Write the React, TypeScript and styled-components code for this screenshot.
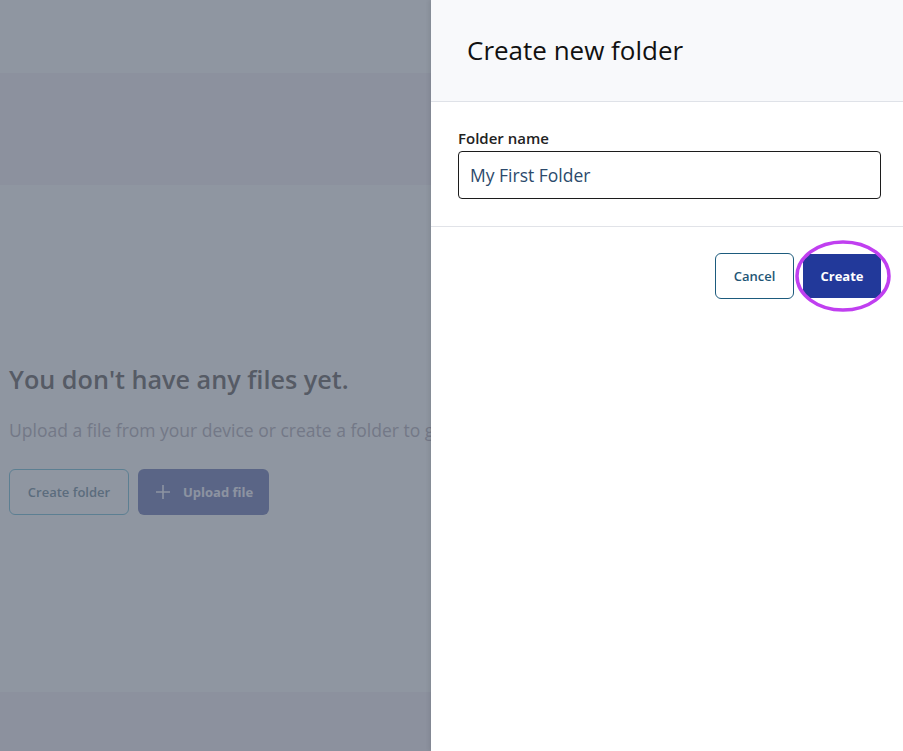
import React from "react";
import styled, { createGlobalStyle } from "styled-components";

const Global = createGlobalStyle`
  html, body { margin: 0; padding: 0; height: 100%; overflow: hidden; }
  body { font-family: "Open Sans", "Noto Sans", sans-serif; background: #ffffff; }
  #root { height: 100%; }
  * { box-sizing: border-box; }
`;

const Page = styled.div`
  position: relative;
  height: 751px;
  width: 903px;
  display: flex;
  flex-direction: column;
  overflow: hidden;
`;

const Band = styled.div<{ $h: number; $bg: string }>`
  height: ${(p) => p.$h}px;
  flex: none;
  background: ${(p) => p.$bg};
`;

const Main = styled.main`
  flex: 1;
  display: flex;
  flex-direction: column;
  justify-content: center;
  padding: 0 9px;
  background: #ffffff;
`;

const EmptyTitle = styled.h2`
  margin: 0;
  font-size: 25.2px;
  font-weight: 600;
  line-height: 32px;
  color: #8c8887;
  white-space: nowrap;
`;

const EmptyText = styled.p`
  margin: 22px 0 0;
  font-size: 17.5px;
  line-height: 26px;
  color: #c7c3ca;
  white-space: nowrap;
`;

const Actions = styled.div`
  display: flex;
  gap: 9px;
  margin-top: 26px;
`;

const GhostButton = styled.button`
  height: 46px;
  width: 120px;
  border-radius: 6px;
  border: 1px solid #99d1e0;
  background: transparent;
  font-family: inherit;
  font-size: 13px;
  font-weight: 600;
  color: #97abb6;
`;

const SolidButton = styled.button`
  height: 46px;
  width: 131px;
  padding: 0 0 0 17px;
  border-radius: 6px;
  border: none;
  background: #959dc8;
  font-family: inherit;
  font-size: 13px;
  font-weight: 700;
  color: #f9f9ff;
  display: flex;
  align-items: center;
  gap: 12px;
`;

const Overlay = styled.div`
  position: absolute;
  inset: 0;
  background: rgba(31, 45, 68, 0.5);
`;

const Drawer = styled.aside`
  position: absolute;
  top: 0;
  right: 0;
  width: 472px;
  height: 100%;
  background: #ffffff;
  box-shadow: -2px 0 4px rgba(0, 0, 0, 0.08);
  display: flex;
  flex-direction: column;
`;

const DrawerHeader = styled.header`
  height: 102px;
  flex: none;
  background: #f8f9fb;
  border-bottom: 1px solid #dfe2e8;
  display: flex;
  align-items: center;
  padding: 0 36px 2px;
`;

const DrawerTitle = styled.h1`
  margin: 0;
  font-size: 26px;
  font-weight: 400;
  color: #111111;
`;

const DrawerBody = styled.div`
  padding: 25px 22px 27px 27px;
  border-bottom: 1px solid #e1e3e8;
  display: flex;
  flex-direction: column;
  gap: 1px;
`;

const Label = styled.label`
  font-size: 15px;
  font-weight: 600;
  line-height: 23px;
  color: #222222;
`;

const Input = styled.input`
  height: 48px;
  width: 100%;
  border: 1px solid #1c1c1c;
  border-radius: 4px;
  padding: 0 11px;
  font-family: inherit;
  font-size: 17.5px;
  color: #2c4a6c;
  outline: none;
`;

const Footer = styled.div`
  display: flex;
  justify-content: flex-end;
  align-items: center;
  gap: 9px;
  padding: 26px 22px;
`;

const CancelButton = styled.button`
  height: 46px;
  width: 79px;
  border: 1px solid #1d5b7d;
  border-radius: 6px;
  background: #ffffff;
  font-family: inherit;
  font-size: 13px;
  font-weight: 600;
  color: #1f5676;
`;

const CreateWrap = styled.div`
  position: relative;
`;

const CreateButton = styled.button`
  height: 44px;
  width: 78px;
  border: none;
  border-radius: 6px;
  background: #22399a;
  font-family: inherit;
  font-size: 13px;
  font-weight: 700;
  color: #ffffff;
`;

const Highlight = styled.svg`
  position: absolute;
  left: -9px;
  top: -13px;
  width: 98px;
  height: 72px;
  pointer-events: none;
  overflow: visible;
`;

export default function App() {
  return (
    <>
      <Global />
      <Page>
        <Band $h={73} $bg="#ffffff" />
        <Band $h={112} $bg="#f9f5f8" />
        <Main>
          <EmptyTitle>You don't have any files yet.</EmptyTitle>
          <EmptyText>Upload a file from your device or create a folder to get started.</EmptyText>
          <Actions>
            <GhostButton>Create folder</GhostButton>
            <SolidButton>
              <svg width="16" height="16" viewBox="0 0 16 16" fill="none" stroke="#f9f9ff" strokeWidth="1.6">
                <path d="M8 1v14M1 8h14" />
              </svg>
              Upload file
            </SolidButton>
          </Actions>
        </Main>
        <Band $h={59} $bg="#f9f5f8" />
        <Overlay />
        <Drawer>
          <DrawerHeader>
            <DrawerTitle>Create new folder</DrawerTitle>
          </DrawerHeader>
          <DrawerBody>
            <Label htmlFor="folder-name">Folder name</Label>
            <Input id="folder-name" defaultValue="My First Folder" />
          </DrawerBody>
          <Footer>
            <CancelButton>Cancel</CancelButton>
            <CreateWrap>
              <CreateButton>Create</CreateButton>
              <Highlight viewBox="0 0 98 72">
                <ellipse cx="49" cy="35" rx="46" ry="34" fill="none" stroke="#c03ff0" strokeWidth="3.5" />
              </Highlight>
            </CreateWrap>
          </Footer>
        </Drawer>
      </Page>
    </>
  );
}
